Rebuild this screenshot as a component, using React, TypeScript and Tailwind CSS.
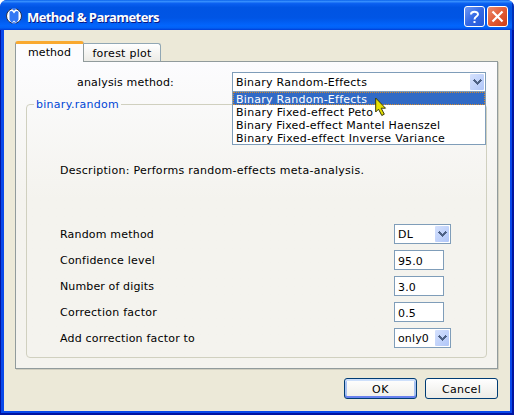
import React from "react";

const FONT = "font-['DejaVu_Sans',Verdana,sans-serif]";

function Label({ w, children, className = "" }: { w: number; children: string; className?: string }) {
  const ref = React.useRef<HTMLSpanElement>(null);
  React.useLayoutEffect(() => {
    const el = ref.current;
    if (!el) return;
    el.style.letterSpacing = "0px";
    const natural = el.getBoundingClientRect().width;
    el.style.letterSpacing = `${(w - natural) / children.length}px`;
  }, [w, children]);
  return (
    <span ref={ref} className={`inline-block shrink-0 whitespace-pre ${className}`}>
      {children}
    </span>
  );
}

function Arrow() {
  return (
    <span className="flex h-4 w-3.5 shrink-0 items-center justify-center rounded-[1px] bg-linear-to-br from-[#d5e1fd] to-[#b0c6f8]">
      <svg width="9" height="6" viewBox="0 0 9 6" shapeRendering="crispEdges">
        <path d="M0 1h1V0h1v1h1v1h1v1h1V2h1V1h1V0h1v1h1v1H8v1H7v1H6v1H5v1H4V5H3V4H2V3H1V2H0z" fill="#4d6185" />
      </svg>
    </span>
  );
}

function Combo({ value, w, className }: { value: string; w: number; className: string }) {
  return (
    <div className={`flex h-5 items-center justify-between border border-[#7f9db9] bg-white pr-px pl-[3px] ${className}`}>
      <Label w={w}>{value}</Label>
      <Arrow />
    </div>
  );
}

function Field({ value, w }: { value: string; w: number }) {
  return (
    <div className="flex h-5 w-[50px] items-center border border-[#7f9db9] bg-white pt-[2px] pl-[3px]">
      <Label w={w}>{value}</Label>
    </div>
  );
}

function Row({ label, w, children }: { label: string; w: number; children: React.ReactNode }) {
  return (
    <div className="flex h-5 items-center">
      <div className="flex w-[334px]">
        <Label w={w}>{label}</Label>
      </div>
      {children}
    </div>
  );
}

const OPTIONS: [string, number][] = [
  ["Binary Random-Effects", 131],
  ["Binary Fixed-effect Peto", 137],
  ["Binary Fixed-effect Mantel Haenszel", 204],
  ["Binary Fixed-effect Inverse Variance", 209],
];

export default function App() {
  return (
    <div className={`flex h-[415px] w-[514px] flex-col overflow-hidden rounded-t-[7px] bg-[#0831d9] text-[11px] leading-[13px] text-black ${FONT}`}>
      {/* title bar */}
      <header className="flex h-[30px] shrink-0 items-center border-r-2 border-[#0030b8] bg-[linear-gradient(180deg,#0058e6_0%,#3a93ff_4%,#0a5ff0_12%,#0054e3_25%,#0055e5_60%,#0265fd_85%,#0261f5_93%,#003dd7_100%)] pr-1 pl-[6px]">
        <svg width="16" height="16" viewBox="0 0 16 16" className="mt-[2px] shrink-0">
          <circle cx="8" cy="8" r="7.5" fill="#fff" stroke="#26314f" strokeWidth="1" />
          <path d="M3.5 3.5 6 3l2 2.5L10 3l2.5.5v8L10.5 15 8 12.5 5.5 15l-2-3.5z" fill="#3478f4" />
          <path d="M5.5 0h5L8 3zM6 16l2-2.5 2 2.5z" fill="#3478f4" />
        </svg>
        <div className="mt-[3px] ml-[5px] grow font-['Open_Sans',sans-serif] text-[13px] leading-4 font-bold text-white [text-shadow:1px_1px_0_#0a1883]">
          <Label w={132}>Method &amp; Parameters</Label>
        </div>
        <div className="mt-[3px] flex gap-[2px]">
          <button className="flex size-[21px] items-center justify-center rounded-[3px] border border-white bg-linear-to-br from-[#6f98f3] via-[#3468e4] to-[#2358d8]">
            <svg width="11" height="14" viewBox="0 0 11 14" fill="none" stroke="#fff" strokeWidth="2">
              <path d="M2 4.4C2 .8 9 .8 9 4.2 9 6.5 5.5 6.6 5.5 9.4M5.5 11v2" />
            </svg>
          </button>
          <button className="flex size-[21px] items-center justify-center rounded-[3px] border border-white bg-linear-to-br from-[#ea8a6c] via-[#e25b35] to-[#cc3c14]">
            <svg width="13" height="13" viewBox="0 0 13 13" stroke="#fff" strokeWidth="2.2">
              <path d="M1.5 1.5l10 10M11.5 1.5l-10 10" />
            </svg>
          </button>
        </div>
      </header>

      <div className="flex grow border-t-0 border-r-2 border-b-2 border-l border-[#0014a0]">
        <div className="flex grow border-r-2 border-b-2 border-l-[3px] border-[#0848ea]">
          <main className="flex grow flex-col bg-[#ece9d8] pt-[11px] pr-3 pl-[11px]">
            {/* tabs */}
            <nav className="flex h-5 items-end">
              <div className="z-10 -mb-px flex h-[21px] w-[69px] justify-center rounded-t-[3px] border-x border-t-[3px] border-[#919b9c] border-t-[#f9a930] bg-[#fcfcfe] pt-[2px]">
                <Label w={43}>method</Label>
              </div>
              <div className="flex h-[18px] w-[77px] justify-center rounded-tr-[3px] border-t border-r border-[#91a7b4] bg-linear-to-b from-white to-[#ecebe6] pt-[3px]">
                <Label w={59}>forest plot</Label>
              </div>
            </nav>

            {/* tab page */}
            <section className="h-[308px] w-[483px] border border-[#919b9c] bg-linear-to-b from-[#fcfcfe] to-[#f4f3ee] to-45% pt-[10px] pr-[11px] pl-[10px] shadow-[1px_1px_0_#d0cebf]">
              <div className="flex h-5 items-center pl-[51px]">
                <div className="w-[155px]">
                  <Label w={97}>analysis method:</Label>
                </div>
                <div className="relative">
                  <Combo value="Binary Random-Effects" w={131} className="w-[254px]" />
                  <ul className="absolute top-[19px] left-0 z-20 w-[254px] border border-[#7f9db9] bg-white">
                    {OPTIONS.map(([name, w], i) => (
                      <li
                        key={name}
                        className={`flex h-[13px] ${i === 0 ? "border border-dotted border-[#d58a2c] bg-[#316ac5] pl-[2px] text-white" : "pt-px pl-[3px]"}`}
                      >
                        <Label w={w}>{name}</Label>
                      </li>
                    ))}
                  </ul>
                  {/* mouse pointer */}
                  <svg className="absolute top-[25px] left-[143px] z-30" width="12" height="21" viewBox="0 0 12 21">
                    <path d="M.7 1v14l2.8-2.8 3.3 6.3 2.5-1.3-3.1-6h4.3z" fill="#e6e000" stroke="#36380a" strokeWidth="1" />
                  </svg>
                </div>
              </div>

              <fieldset className="mt-[5px] h-[261px] w-[461px] rounded-[4px] border border-[#d0d0bf] pl-[7px]">
                <legend className="h-[14px] px-[2px] pt-px text-[#0046d5]">
                  <Label w={83}>binary.random</Label>
                </legend>
                <div className="pt-[53px] pl-[26px]">
                  <Label w={304}>Description: Performs random-effects meta-analysis.</Label>
                </div>
                <div className="mt-[47px] flex flex-col gap-[6px] pl-[26px]">
                  <Row label="Random method" w={94}>
                    <Combo value="DL" w={15} className="w-[57px]" />
                  </Row>
                  <Row label="Confidence level" w={95}>
                    <Field value="95.0" w={25} />
                  </Row>
                  <Row label="Number of digits" w={94}>
                    <Field value="3.0" w={18} />
                  </Row>
                  <Row label="Correction factor" w={97}>
                    <Field value="0.5" w={18} />
                  </Row>
                  <Row label="Add correction factor to" w={135}>
                    <Combo value="only0" w={31} className="w-[57px]" />
                  </Row>
                </div>
              </fieldset>
            </section>

            {/* dialog buttons */}
            <footer className="mt-[9px] flex h-[21px] justify-end gap-2">
              <button className="flex w-[73px] items-center justify-center rounded-[3px] border border-[#003c74] bg-linear-to-b from-white to-[#efeee8] pt-px shadow-[inset_0_2px_0_#cee0fb,inset_0_-2px_0_#6982ee,inset_2px_0_0_#a8c2f2,inset_-2px_0_0_#a8c2f2]">
                <Label w={17}>OK</Label>
              </button>
              <button className="flex w-[73px] items-center justify-center rounded-[3px] border border-[#003c74] bg-linear-to-b from-white to-[#ecebe6] pt-px">
                <Label w={39}>Cancel</Label>
              </button>
            </footer>
          </main>
        </div>
      </div>
    </div>
  );
}
